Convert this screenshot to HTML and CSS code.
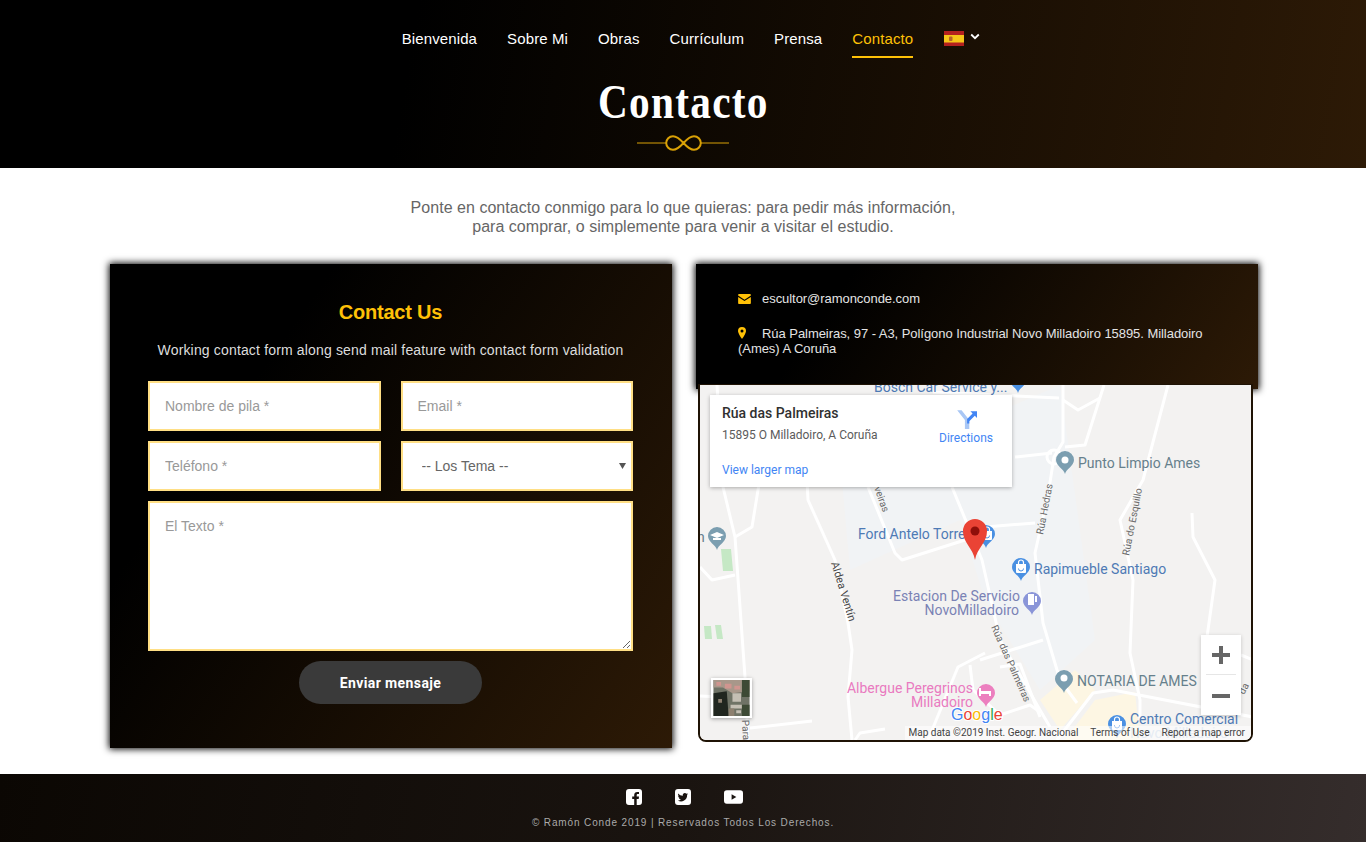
FILE: index.html
```html
<!DOCTYPE html>
<html lang="es">
<head>
<meta charset="utf-8">
<title>Contacto</title>
<link rel="stylesheet" href="styles.css">
</head>
<body>
<header class="hero">
  <nav class="nav">
    <a class="nav-link" href="#">Bienvenida</a>
    <a class="nav-link" href="#">Sobre Mi</a>
    <a class="nav-link" href="#">Obras</a>
    <a class="nav-link" href="#">Currículum</a>
    <a class="nav-link" href="#">Prensa</a>
    <a class="nav-link active" href="#">Contacto</a>
    <span class="lang">
      <svg class="flag" viewBox="0 0 20 15" width="20" height="15"><rect width="20" height="15" fill="#b3201f"/><rect y="4" width="20" height="7.500" fill="#f5c518"/><rect x="5" y="5.500" width="3.500" height="4.500" rx="1" fill="#b5622a"/></svg>
      <svg class="chev" viewBox="0 0 10 7" width="10" height="7"><path d="M1.200 1.500 5 5.200 8.800 1.500" fill="none" stroke="#fff" stroke-width="1.800"/></svg>
    </span>
  </nav>
  <h1 class="title">Contacto</h1>
  <svg class="divider" viewBox="0 0 92 18" width="92" height="18">
    <path d="M0 9H30M63 9H92" stroke="#d9a106" stroke-width="1" fill="none"/>
    <path d="M46.500 9C42 4 39 2.200 36 2.200a6.800 6.800 0 0 0 0 13.600C39 15.800 42 14 46.500 9S54 2.200 57 2.200a6.800 6.800 0 0 1 0 13.600C54 15.800 51 14 46.500 9Z" fill="none" stroke="#d9a106" stroke-width="2"/>
  </svg>
</header>

<main class="main">
  <p class="intro">Ponte en contacto conmigo para lo que quieras: para pedir más información,<br>para comprar, o simplemente para venir a visitar el estudio.</p>
  <div class="columns">
    <section class="panel form-panel">
      <h2 class="form-title">Contact Us</h2>
      <p class="form-sub">Working contact form along send mail feature with contact form validation</p>
      <form class="form-grid">
        <input class="field" type="text" placeholder="Nombre de pila *">
        <input class="field" type="text" placeholder="Email *">
        <input class="field" type="text" placeholder="Teléfono *">
        <select class="field select"><option>-- Los Tema --</option></select>
        <textarea class="field area" placeholder="El Texto *"></textarea>
        <button class="send" type="button">Enviar mensaje</button>
      </form>
    </section>

    <div class="side">
      <section class="panel info">
        <p class="info-line"><svg class="info-icon mail" viewBox="0 0 14 11" width="13" height="10"><path d="M0 1.200C0 .5.5 0 1.200 0h11.600c.7 0 1.200.5 1.200 1.200v.5L7 6.200 0 1.700ZM0 3.200l7 4.500 7-4.500v6.600c0 .7-.5 1.200-1.200 1.200H1.200C.5 11 0 10.500 0 9.800Z" fill="#ffc107"/></svg>escultor@ramonconde.com</p>
        <p class="info-line"><svg class="info-icon pin" viewBox="0 0 8 12" width="8" height="12"><path fill-rule="evenodd" d="M4 0a4 4 0 0 0-4 4c0 2.500 4 8 4 8s4-5.500 4-8a4 4 0 0 0-4-4Zm0 2.500a1.500 1.500 0 1 1 0 3 1.500 1.500 0 0 1 0-3Z" fill="#ffc107"/></svg>Rúa Palmeiras, 97 - A3, Polígono Industrial Novo Milladoiro 15895. Milladoiro (Ames) A Coruña</p>
      </section>
      <div class="map">
        <svg class="map-svg" viewBox="700 385 551 355" width="551" height="355">
          <defs>
            <path id="mk" d="M0 0c-1-5-9-8-9-14a9 9 0 0 1 18 0c0 6-8 9-9 14Z"/>
            <g id="bag"><path d="M-5-2h10v8a1 1 0 0 1-1 1h-8a1 1 0 0 1-1-1Z" fill="#fff"/><path d="M-2.500-2v-1.500a2.500 2.500 0 0 1 5 0V-2" fill="none" stroke="#fff" stroke-width="1.200"/><path d="M-2.500 2.500a2.500 2.500 0 0 0 5 0" fill="none" stroke="#4a90e2" stroke-width="1"/></g>
          </defs>
          <rect x="700" y="385" width="551" height="355" fill="#f3f2f1"/>
          <path d="M842 480 1060 385 1095 640 1040 690 985 600 960 520 850 570Z" fill="#f1f3f5"/>
          <path d="M1040 700 1075 670 1095 690 1060 730Z" fill="#fdf6e3"/>
          <path d="M1065 740 1095 700 1135 692 1140 740Z" fill="#fdf6e3"/>
          <g fill="#c5e8c5">
            <path d="M721 549 731 549 733 571 723 571Z"/>
            <path d="M704 626 711 626 712 639 705 639Z"/>
            <path d="M715 625 721 625 723 639 717 639Z"/>
          </g>
          <g fill="none" stroke="#fff" stroke-width="3" stroke-linejoin="round">
            <path d="M717 385 723 487 735 537 745 677 748 740"/>
            <path d="M735 537 752 527 758 490 760 480"/>
            <path d="M700 567 712 580 735 575"/>
            <path d="M700 696 745 698"/>
            <path d="M750 728 812 721"/>
            <path d="M807 480 808 500 835 560 848 623 852 650 848 697 852 740"/>
            <path d="M855 740 860 733 885 729"/>
            <path d="M868 487 895 553 902 560 965 540 985 527 1035 523"/>
            <path d="M952 487 982 560 1000 640 1040 710 1050 727"/>
            <path d="M1063 385 1063 442 1054 457 1048 495 1035 553 1043 623 1060 680 1077 703"/>
            <path d="M1104 385 1085 445 1065 447"/>
            <path d="M1168 385 1143 480 1120 520 1133 580 1130 653 1140 700 1140 720"/>
            <path d="M1192 513 1193 537 1215 580 1207 637"/>
            <path d="M1057 740 1093 693 1113 690 1253 717"/>
            <path d="M980 660 1043 640"/>
            <path d="M985 653 958 667 928 740"/>
            <path d="M970 665 973 690 1000 715"/>
            <path d="M1015 457 1052 453"/>
            <path d="M933 392 1059 398"/>
            <path d="M1040 717 1020 664 1000 667"/>
            <path d="M1000 715 1030 705 1040 712"/>
            <path d="M1241 655 1253 660"/>
            <path d="M1063 400 1078 410 1100 398"/>
          </g>
          <circle cx="1054" cy="457" r="7" fill="none" stroke="#fff" stroke-width="3"/>
          <g class="lab-road">
            <text transform="translate(831 563) rotate(73)" class="dark">Aldea Ventín</text>
            <text transform="translate(991 627) rotate(66)">Rúa das Palmeiras</text>
            <text transform="translate(1043 535) rotate(-79)">Rúa Hedras</text>
            <text transform="translate(1129 556) rotate(-79)">Rúa do Esquillo</text>
            <text transform="translate(742 720) rotate(87)">Para</text>
            <text transform="translate(874 488) rotate(70)">veiras</text>
            <text transform="translate(1244 695) rotate(-62)">da</text>
          </g>
          <use href="#mk" x="1018" y="393" fill="#4a90e2"/>
          <text class="lab lab-blue" x="874" y="392">Bosch Car Service y...</text>
          <use href="#mk" x="1065" y="474" fill="#7b9eb0"/><circle cx="1065" cy="460" r="3.500" fill="#fff"/>
          <text class="lab lab-grey" x="1078" y="468">Punto Limpio Ames</text>
          <use href="#mk" x="717" y="550" fill="#7b9eb0"/><path d="M710 535l7-3 7 3-7 3ZM713 538h8v2h-8Z" fill="#fff"/>
          <text class="lab lab-grey" x="697" y="542">n</text>
          <text class="lab lab-blue" x="858" y="539">Ford Antelo Torre</text>
          <use href="#mk" x="986" y="548" fill="#4a90e2"/><use href="#bag" x="987" y="533"/>
          <use href="#mk" x="1021" y="581" fill="#4a90e2"/><use href="#bag" x="1021" y="566"/>
          <text class="lab lab-blue" x="1034" y="574">Rapimueble Santiago</text>
          <use href="#mk" x="1032" y="615" fill="#8a95d8"/><path d="M1028 594h6v11h-6ZM1035 596h2v6h-2Z" fill="#fff"/>
          <text class="lab lab-purple" text-anchor="end" x="1020" y="601">Estacion De Servicio</text>
          <text class="lab lab-purple" text-anchor="end" x="1019" y="615">NovoMilladoiro</text>
          <use href="#mk" x="986" y="707" fill="#ec7fbf"/><path d="M979 688h2v3h10v5h-2v-2h-8v2h-2Z" fill="#fff"/>
          <text class="lab lab-pink" text-anchor="end" x="973" y="693">Albergue Peregrinos</text>
          <text class="lab lab-pink" text-anchor="end" x="973" y="707">Milladoiro</text>
          <use href="#mk" x="1064" y="693" fill="#7b9eb0"/><circle cx="1064" cy="678" r="3.500" fill="#fff"/>
          <text class="lab lab-grey" x="1077" y="686">NOTARIA DE AMES</text>
          <use href="#mk" x="1117" y="738" fill="#4a90e2"/><use href="#bag" x="1117" y="723"/>
          <text class="lab lab-blue" x="1130" y="724">Centro Comercial</text>
          <text class="lab lab-faint" x="1130" y="738">Novo Milladoiro</text>
          <path d="M975 560C973 548 963 543 963 531a12 12 0 0 1 24 0C987 543 977 548 975 560Z" fill="#ea4335"/>
          <circle cx="975" cy="531" r="4.500" fill="#8f0f0a"/>
          <text class="g-logo" x="951" y="720"><tspan fill="#4285f4">G</tspan><tspan fill="#ea4335">o</tspan><tspan fill="#fbbc05">o</tspan><tspan fill="#4285f4">g</tspan><tspan fill="#34a853">l</tspan><tspan fill="#ea4335">e</tspan></text>
        </svg>

        <div class="place-card">
          <div class="place-text">
            <div class="place-name">Rúa das Palmeiras</div>
            <div class="place-addr">15895 O Milladoiro, A Coruña</div>
          </div>
          <div class="place-dir">
            <svg viewBox="0 0 20 20" width="22" height="22"><path d="M2 2 9 11v8h4v-8L6 2Z" fill="#a9c7f5"/><path d="M11 10 16 5l-2-2h6v6l-2-2-5 5v2h-2Z" fill="#4285f4"/></svg>
            <span>Directions</span>
          </div>
          <a class="place-link" href="#">View larger map</a>
        </div>

        <div class="zoom-ctl">
          <button class="zoom-btn plus" type="button" aria-label="Zoom in"></button>
          <span class="zoom-sep"></span>
          <button class="zoom-btn minus" type="button" aria-label="Zoom out"></button>
        </div>

        <div class="thumb">
          <svg viewBox="0 0 38 38" width="38" height="38">
            <rect width="38" height="38" fill="#6f7366"/>
            <path d="M0 14 14 12 16 38H0Z" fill="#20261f"/>
            <path d="M0 0H38V12L20 14 10 8 0 8Z" fill="#a8978a"/>
            <path d="M12 4h7v5h-7ZM22 6h6v4h-6ZM3 2h5v4H3Z" fill="#d0958f"/>
            <path d="M20 14h9v9h-9ZM18 26h12v4H18ZM24 32h5v3h-5Z" fill="#c4bfb4"/>
            <path d="M30 0h8v18h-8ZM30 26h8v12h-8Z" fill="#3d4a35"/>
            <path d="M16 30h6v8h-6ZM5 20h4v4H5Z" fill="#8d8070"/>
          </svg>
        </div>

        <div class="attrib">
          <span>Map data ©2019 Inst. Geogr. Nacional</span>
          <span>Terms of Use</span>
          <span>Report a map error</span>
        </div>
      </div>
    </div>
  </div>
</main>

<footer class="footer">
  <div class="social">
    <svg viewBox="0 0 16 16" width="16" height="16"><path fill-rule="evenodd" d="M3 0h10a3 3 0 0 1 3 3v10a3 3 0 0 1-3 3h-2.300v-6h2l.3-2.400h-2.300V6.200c0-.7.2-1.100 1.200-1.100H13V3c-.3 0-1-.1-1.800-.1-1.800 0-3 1.100-3 3.100v1.600h-2V10h2v6H3a3 3 0 0 1-3-3V3a3 3 0 0 1 3-3Z" fill="#fff"/></svg>
    <svg viewBox="0 0 16 16" width="16" height="16"><path fill-rule="evenodd" d="M3 0h10a3 3 0 0 1 3 3v10a3 3 0 0 1-3 3H3a3 3 0 0 1-3-3V3a3 3 0 0 1 3-3Zm10 5.200c-.4.200-.8.300-1.200.3.400-.3.800-.7.900-1.200-.4.200-.9.400-1.300.5a2.100 2.100 0 0 0-3.600 1.900C6 6.600 4.400 5.800 3.400 4.400c-.6 1-.3 2.200.6 2.800-.3 0-.7-.1-.9-.3 0 1 .7 1.900 1.700 2.100-.3.100-.6.100-.9 0 .3.900 1.100 1.400 2 1.500-.9.700-2 1-3.100.9a6 6 0 0 0 9.300-5.300c.4-.3.700-.6.900-.9Z" fill="#fff"/></svg>
    <svg viewBox="0 0 20 14" width="19" height="14"><path fill-rule="evenodd" d="M3 0h14a3 3 0 0 1 3 3v8a3 3 0 0 1-3 3H3a3 3 0 0 1-3-3V3a3 3 0 0 1 3-3Zm5 4v6l5-3Z" fill="#fff"/></svg>
  </div>
  <p class="copy">© Ramón Conde 2019 | Reservados Todos Los Derechos.</p>
</footer>
</body>
</html>
```

FILE: styles.css
```css
* { box-sizing: border-box; }
html, body { margin: 0; padding: 0; }
body {
  font-family: "Liberation Sans", Arial, sans-serif;
  background: #fff;
  color: #666;
  width: 1366px;
  height: 842px;
  overflow: hidden;
}
.hero {
  height: 168px;
  background: linear-gradient(100deg, #000 30%, #2d1a06 100%);
  display: flex;
  flex-direction: column;
  align-items: center;
  padding-top: 20px;
}
.nav {
  display: flex;
  align-items: flex-start;
  gap: 30px;
  height: 38px;
  padding-left: 16px;
}
.nav-link {
  color: #fff;
  font-size: 15px;
  line-height: 18px;
  letter-spacing: .12px;
  padding: 10px 0 8px;
  height: 38px;
  border-bottom: 2px solid transparent;
  text-decoration: none;
}
.nav-link.active {
  color: #ffc107;
  border-bottom-color: #ffc107;
}
.lang {
  display: flex;
  align-items: flex-start;
  gap: 6px;
  padding-top: 11px;
  margin-left: 1px;
}
.flag { display: block; }
.chev { display: block; margin-top: 2px; }
.title {
  margin: 19px 0 0;
  font-family: "Liberation Serif", serif;
  font-size: 48px;
  line-height: 49px;
  font-weight: 700;
  color: #fff;
  letter-spacing: 1.500px;
  transform: scaleX(.86);
}
.divider { display: block; margin-top: 8px; }
.main {
  width: 1150px;
  margin: 0 auto;
  height: 606px;
}
.intro {
  margin: 0;
  padding-top: 30px;
  text-align: center;
  font-size: 16px;
  line-height: 19px;
  letter-spacing: .03px;
  color: #666;
}
.columns {
  display: grid;
  grid-template-columns: 564px 564px;
  gap: 22px;
  margin-top: 28px;
}
.panel {
  background: linear-gradient(125deg, #000 25%, #2d1a06 100%);
  box-shadow: 0 0 7px 1px #000;
}
.form-panel {
  width: 562px;
  height: 484px;
  margin-left: 2px;
  padding: 37px 39px 0 38px;
}
.form-title {
  margin: 0;
  text-align: center;
  color: #ffc107;
  font-size: 20px;
  line-height: 23px;
  letter-spacing: -.2px;
  font-weight: 700;
}
.form-sub {
  margin: 17px 0 0;
  text-align: center;
  color: #ddd;
  font-size: 14px;
  line-height: 18px;
  letter-spacing: .16px;
}
.form-grid {
  margin-top: 22px;
  display: grid;
  grid-template-columns: 1fr 1fr;
  gap: 10px 20px;
}
.field {
  display: block;
  width: 100%;
  height: 50px;
  border: 2px solid #ffdf85;
  border-radius: 0;
  background: #fff;
  padding: 0 15px;
  font-family: "Liberation Sans", Arial, sans-serif;
  font-size: 14px;
  color: #666;
  outline: none;
  margin: 0;
}
.field::placeholder { color: #999; opacity: 1; }
.select {
  appearance: none;
  -webkit-appearance: none;
  padding-left: 19px;
  background-image: url("data:image/svg+xml,%3Csvg xmlns='http://www.w3.org/2000/svg' width='7' height='6'%3E%3Cpath d='M0 0h7L3.500 6Z' fill='%23555'/%3E%3C/svg%3E");
  background-repeat: no-repeat;
  background-position: right 5px center;
}
.area {
  grid-column: 1 / -1;
  height: 150px;
  padding: 15px;
  resize: vertical;
}
.send {
  grid-column: 1 / -1;
  justify-self: center;
  width: 183px;
  height: 43px;
  border: 0;
  border-radius: 22px;
  background: #3a3a3a;
  color: #fff;
  font-family: Roboto, sans-serif;
  font-weight: 700;
  font-size: 14px;
  letter-spacing: .4px;
}
.side { display: flex; flex-direction: column; align-items: flex-start; }
.info {
  width: 562px;
  height: 125px;
  margin-left: 2px;
  padding: 27px 42px 0;
  font-size: 13px;
  line-height: 15px;
  letter-spacing: -.05px;
}
.info-line { margin: 0 0 20px; color: #e4e4e4; }
.info-icon { display: inline-block; vertical-align: -1px; margin-right: 11px; }
.pin { margin-right: 16px; }
.map {
  position: relative;
  z-index: 2;
  flex: none;
  width: 555px;
  height: 358px;
  margin: -5px 0 0 4px;
  border: 2px solid #1f1305;
  border-top-width: 1px;
  border-radius: 0 0 8px 8px;
  overflow: hidden;
  background: #f3f2f1;
}
.map-svg { display: block; }
.lab { font-family: Roboto, sans-serif; font-size: 14px; }
.lab-blue { fill: #4e7ab5; }
.lab-grey { fill: #66808c; }
.lab-purple { fill: #7a82b5; }
.lab-pink { fill: #e97ac0; }
.lab-faint { fill: #c6d4e6; }
.lab-road text { font-family: Roboto, sans-serif; font-size: 10px; fill: #6a6a6a; }
.lab-road .dark { fill: #444; font-size: 11px; }
.g-logo {
  font-family: "Liberation Sans", sans-serif;
  font-size: 16px;
  paint-order: stroke;
  stroke: #fff;
  stroke-width: 2px;
}
.place-card {
  position: absolute;
  left: 10px;
  top: 10px;
  width: 302px;
  height: 92px;
  background: #fff;
  box-shadow: 0 1px 4px rgba(0, 0, 0, .3);
  font-family: Roboto, sans-serif;
  padding: 10px 12px;
  display: grid;
  grid-template-columns: 1fr 64px;
  grid-template-rows: 50px 1fr;
}
.place-name { font-size: 14px; font-weight: 500; color: #303030; line-height: 16px; }
.place-addr { font-size: 12px; color: #5b5b5b; line-height: 14px; margin-top: 7px; }
.place-dir {
  display: flex;
  flex-direction: column;
  align-items: center;
  gap: 1px;
  color: #4285f4;
  font-size: 12px;
  line-height: 14px;
  transform: translate(-2px, 3px);
}
.place-link {
  grid-column: 1 / -1;
  color: #4285f4;
  font-size: 12px;
  line-height: 14px;
  text-decoration: none;
  align-self: end;
}
.zoom-ctl {
  position: absolute;
  left: 501px;
  top: 250px;
  width: 40px;
  height: 80px;
  background: #fff;
  box-shadow: 0 1px 4px rgba(0, 0, 0, .2);
  display: flex;
  flex-direction: column;
  align-items: center;
}
.zoom-btn {
  position: relative;
  width: 40px;
  height: 40px;
  border: 0;
  background: transparent;
  padding: 0;
}
.zoom-btn::before {
  content: "";
  position: absolute;
  left: 11px;
  top: 18px;
  width: 18px;
  height: 4px;
  background: #666;
}
.minus::before { top: 19px; }
.plus::after {
  content: "";
  position: absolute;
  left: 18px;
  top: 11px;
  width: 4px;
  height: 18px;
  background: #666;
}
.zoom-sep { display: block; width: 30px; height: 1px; background: #e6e6e6; margin: -1px 0 0; }
.thumb {
  position: absolute;
  left: 11px;
  top: 293px;
  width: 41px;
  height: 40px;
  border: 2px solid #fff;
  box-shadow: 0 1px 4px rgba(0, 0, 0, .35);
  overflow: hidden;
}
.thumb svg { display: block; width: 37px; height: 36px; }
.attrib {
  position: absolute;
  right: 0;
  bottom: 0;
  height: 14px;
  padding: 0 6px 0 4px;
  display: flex;
  gap: 12px;
  font-family: Roboto, sans-serif;
  font-size: 10px;
  line-height: 14px;
  color: #444;
  background: rgba(255, 255, 255, .55);
}
.footer {
  height: 68px;
  background: linear-gradient(100deg, #0b0703 0%, #1a1410 50%, #352d2c 100%);
  display: flex;
  flex-direction: column;
  align-items: center;
  padding-top: 15px;
}
.social {
  display: flex;
  align-items: center;
  gap: 33px;
  height: 16px;
  padding-left: 2px;
}
.social svg { display: block; }
.copy {
  margin: 12px 0 0;
  color: #aaa;
  font-size: 10px;
  font-weight: 400;
  line-height: 12px;
  letter-spacing: .87px;
}
```
